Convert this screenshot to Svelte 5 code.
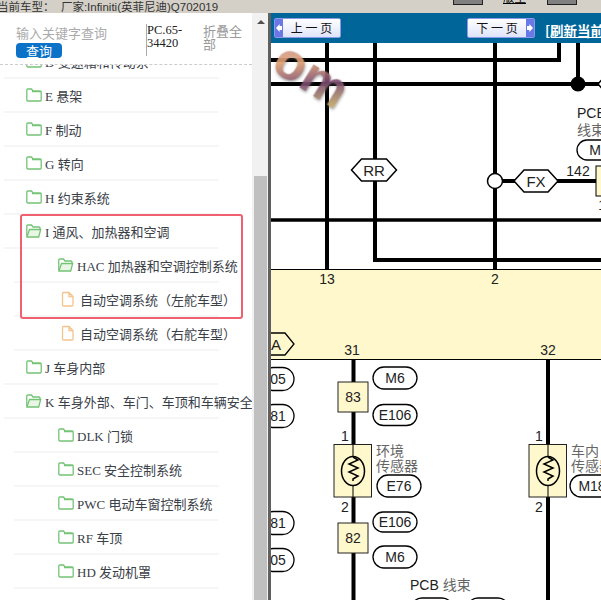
<script>
	// Wiring manual viewer: chapter tree on the left, diagram page on the right.
	const tree = [
		{ label: 'D 变速箱和传动系', kind: 'closed', level: 1 },
		{ label: 'E 悬架', kind: 'closed', level: 1 },
		{ label: 'F 制动', kind: 'closed', level: 1 },
		{ label: 'G 转向', kind: 'closed', level: 1 },
		{ label: 'H 约束系统', kind: 'closed', level: 1 },
		{ label: 'I 通风、加热器和空调', kind: 'open', level: 1 },
		{ label: 'HAC 加热器和空调控制系统', kind: 'open', level: 2 },
		{ label: '自动空调系统（左舵车型）', kind: 'leaf', level: 2 },
		{ label: '自动空调系统（右舵车型）', kind: 'leaf', level: 2 },
		{ label: 'J 车身内部', kind: 'closed', level: 1 },
		{ label: 'K 车身外部、车门、车顶和车辆安全', kind: 'open', level: 1 },
		{ label: 'DLK 门锁', kind: 'closed', level: 2 },
		{ label: 'SEC 安全控制系统', kind: 'closed', level: 2 },
		{ label: 'PWC 电动车窗控制系统', kind: 'closed', level: 2 },
		{ label: 'RF 车顶', kind: 'closed', level: 2 },
		{ label: 'HD 发动机罩', kind: 'closed', level: 2 }
	];

	// connector pills: centre x/y, width, height
	const pills = [
		{ t: '05', x: 278, y: 379, w: 32, h: 23 },
		{ t: '81', x: 278, y: 416, w: 32, h: 23 },
		{ t: '81', x: 278, y: 523, w: 32, h: 23 },
		{ t: '05', x: 278, y: 560, w: 32, h: 23 },
		{ t: 'M6', x: 395, y: 378, w: 44, h: 22 },
		{ t: 'E106', x: 395, y: 415, w: 44, h: 21 },
		{ t: 'E76', x: 399, y: 486, w: 44, h: 22 },
		{ t: 'E106', x: 395, y: 522, w: 44, h: 20 },
		{ t: 'M6', x: 395, y: 557, w: 44, h: 22 },
		{ t: 'M18', x: 592, y: 486, w: 44, h: 22 },
		{ t: 'M2', x: 599, y: 150, w: 44, h: 20 },
		{ t: '', x: 432, y: 609, w: 42, h: 22 },
		{ t: '', x: 488, y: 609, w: 42, h: 22 }
	];

	const boxes = [
		{ t: '83', x: 338, y: 382 },
		{ t: '82', x: 338, y: 523 }
	];

	const labels = [
		{ t: '13', x: 327, y: 284 },
		{ t: '2', x: 495, y: 284 },
		{ t: '31', x: 352, y: 355 },
		{ t: '32', x: 548, y: 355 },
		{ t: '142', x: 578, y: 176 },
		{ t: '14', x: 606, y: 210 },
		{ t: '1', x: 345, y: 441 },
		{ t: '2', x: 345, y: 512 },
		{ t: '1', x: 539, y: 441 },
		{ t: '2', x: 539, y: 512 }
	];

	const sensors = [353, 548];

	function hexPoints(cx, cy, w, h, inset = 10) {
		const l = cx - w / 2;
		const r = cx + w / 2;
		return `${l},${cy} ${l + inset},${cy - h / 2} ${r - inset},${cy - h / 2} ${r},${cy} ${r - inset},${cy + h / 2} ${l + inset},${cy + h / 2}`;
	}
</script>

<div class="page">
	<header class="topbar">
		<span class="car">当前车型：&nbsp; 厂家:Infiniti(英菲尼迪)Q702019</span>
		<span class="tool-btn first"></span>
		<span class="tool-link">版型</span>
		<span class="tool-btn"></span>
	</header>

	<main class="main">
		<aside class="sidebar">
			<div class="search">
				<div class="search-left">
					<div class="placeholder">输入关键字查询</div>
					<button class="query">查询</button>
				</div>
				<div class="code">PC.65-34420</div>
				<div class="collapse">折叠全部</div>
			</div>
			<div class="tree-clip">
				<ul class="tree">
					{#each tree as node}
						<li class="node level{node.level}" class:leaf={node.kind === 'leaf'}>
							{#if node.kind === 'leaf'}
								<svg class="icon" width="13" height="16" viewBox="0 0 13 16">
									<path d="M1.5 2.5a1 1 0 0 1 1-1h5.5l4 4v8.5a1 1 0 0 1-1 1h-8.500a1 1 0 0 1-1-1zM8 1.500v4h4" fill="none" stroke="#f5c48c" stroke-width="1.300" />
								</svg>
							{:else if node.kind === 'open'}
								<svg class="icon" width="16" height="14" viewBox="0 0 16 14">
									<path d="M.8 12V2a1 1 0 0 1 1-1h3.700l1.500 2h6a1 1 0 0 1 1 1v1.500" fill="none" stroke="#74c476" stroke-width="1.300" />
									<path d="M3.500 5.500h11.200l-2 7.500H.9z" fill="#e9f6e6" stroke="#74c476" stroke-width="1.300" />
								</svg>
							{:else}
								<svg class="icon" width="16" height="14" viewBox="0 0 16 14">
									<path d="M.8 12V2a1 1 0 0 1 1-1h3.700l1.500 2h7.200a1 1 0 0 1 1 1v8a1 1 0 0 1-1 1H1.800a1 1 0 0 1-1-1zM6 3.700h9" fill="none" stroke="#74c476" stroke-width="1.300" />
								</svg>
							{/if}
							<span class="label">{node.label}</span>
						</li>
					{/each}
				</ul>
				<div class="highlight"></div>
			</div>
		</aside>

		<div class="scrollbar">
			<span class="arrow"></span>
			<span class="thumb"></span>
		</div>

		<section class="viewer">
			<nav class="pager">
				<button class="page-btn prev"><i class="cap"></i><span>上 一 页</span></button>
				<button class="page-btn next"><span>下 一 页</span><i class="cap"></i></button>
				<a class="refresh" href="#top">[刷新当前页面]</a>
			</nav>

			<svg class="diagram" width="330" height="557" viewBox="271 43 330 557">
				<defs>
					<linearGradient id="wm" x1="0" y1="0" x2="1" y2="1">
						<stop offset="0" stop-color="#b58ab5" />
						<stop offset=".35" stop-color="#e0a070" />
						<stop offset=".6" stop-color="#7a4a70" />
						<stop offset="1" stop-color="#e4d860" />
					</linearGradient>
					<filter id="wm-shadow" x="-20%" y="-20%" width="150%" height="150%">
						<feDropShadow dx="1" dy="1" stdDeviation="1.500" flood-color="#555" flood-opacity=".7" />
					</filter>
				</defs>

				<rect x="271" y="269" width="330" height="90" fill="#fff8cc" />
				<path d="M271 269.500H601M271 359.500H601" stroke="#000" stroke-width="1" />

				<g fill="none" stroke="#000" stroke-width="4">
					<path d="M327 43V269M375 43V260H601M495 43V269M559 43V60H271M578 43V84M271 84H601" />
					<path d="M271 220H601" stroke-width="3.500" />
					<path d="M353.500 359V600M548 359V600" />
					<path d="M495 181H601" />
				</g>

				<circle cx="578" cy="84" r="7.500" fill="#000" />
				<polygon points={hexPoints(610, 84, 24, 22, 10)} fill="#fff" stroke="#000" stroke-width="1.500" />

				<polygon points={hexPoints(374, 170, 45, 22)} fill="#fff" stroke="#000" stroke-width="1.500" />
				<polygon points={hexPoints(536, 181, 44, 22)} fill="#fff" stroke="#000" stroke-width="1.500" />
				<circle cx="495" cy="181" r="7.500" fill="#fff" stroke="#000" stroke-width="1.500" />
				<rect x="596" y="166" width="30" height="30" fill="#fff8cc" stroke="#000" />
				<polygon points="260,333 306,333 294,344 283,355 260,355" fill="none" />
				<polygon points="260,333 285,333 294,344 285,355 260,355" fill="#fff8cc" stroke="#000" stroke-width="1.300" />

				<text class="t big" x="374" y="175.500">RR</text>
				<text class="t big" x="536" y="186.500">FX</text>
				<text class="t big" x="276" y="349.500">A</text>

				{#each labels as l}
					<text class="t" x={l.x} y={l.y}>{l.t}</text>
				{/each}

				{#each pills as p}
					<rect x={p.x - p.w / 2} y={p.y - p.h / 2} width={p.w} height={p.h} rx={p.h / 2} fill="#fff" stroke="#000" stroke-width="1.300" />
					<text class="t" x={p.x} y={p.y + 5}>{p.t}</text>
				{/each}

				{#each boxes as b}
					<rect x={b.x} y={b.y} width="30" height="30" fill="#fff8cc" stroke="#222" />
					<text class="t" x={b.x + 15} y={b.y + 20}>{b.t}</text>
				{/each}

				{#each sensors as x}
					<rect x={x - 19} y="444.500" width="37.500" height="52.500" fill="#fff8cc" stroke="#222" />
					<path d={`M${x} 444V497`} stroke="#000" stroke-width="1" />
					<ellipse cx={x} cy="471" rx="11.500" ry="14.500" fill="#fff8cc" stroke="#000" stroke-width="1.500" />
					<path d={`M${x} 457l5 3-9 4 9 4-9 4 9 4-5 3v2`} fill="none" stroke="#000" stroke-width="1.500" />
				{/each}

				<text class="cn" x="577" y="118">PCB</text>
				<text class="cn grey" x="577" y="135">线束</text>
				<text class="cn grey" x="376" y="456">环境</text>
				<text class="cn grey" x="376" y="471">传感器</text>
				<text class="cn grey" x="571" y="456">车内</text>
				<text class="cn grey" x="571" y="471">传感器</text>
				<text class="cn" x="410" y="590">PCB <tspan class="grey">线束</tspan></text>

				<text class="wm" x="276" y="82" transform="rotate(32 296 64)" filter="url(#wm-shadow)">om</text>
			</svg>
		</section>
	</main>
</div>

<style>
	:global(body) {
		margin: 0;
		background: #fff;
		overflow: hidden;
	}

	.page {
		width: 601px;
		height: 600px;
		display: flex;
		flex-direction: column;
		overflow: hidden;
		font-family: "Liberation Serif", "Noto Sans CJK SC", serif;
	}

	.topbar {
		flex: none;
		height: 13px;
		background: #d4d0c8;
		display: flex;
		align-items: flex-start;
		overflow: hidden;
		font-family: "Liberation Sans", "Noto Sans CJK SC", sans-serif;
		font-size: 11.500px;
		line-height: 16px;
		color: #333;
	}

	.car {
		width: 453px;
		margin-left: -3px;
		margin-top: -1px;
		flex: none;
		white-space: nowrap;
	}

	.tool-btn {
		width: 30px;
		height: 5px;
		flex: none;
		background: #808080;
		border: 1px solid #222;
		border-top: none;
		box-sizing: border-box;
	}

	.tool-btn.first {
		margin-left: 3px;
	}

	.tool-link {
		width: 24px;
		margin: -10px 20px 0;
		flex: none;
		color: #000;
		text-decoration: underline;
		white-space: nowrap;
	}

	.main {
		flex: 1;
		min-height: 0;
		display: flex;
	}

	.sidebar {
		flex: none;
		width: 252px;
		display: flex;
		flex-direction: column;
		background: #fff;
	}

	.search {
		flex: none;
		height: 52px;
		box-sizing: border-box;
		padding: 10px 0 0 16px;
		display: flex;
		align-items: flex-start;
		border-bottom: 1px dashed #ccc;
		margin-left: 4px;
		margin-left: 0;
	}

	.search-left {
		width: 130px;
		flex: none;
	}

	.placeholder {
		font-family: "Noto Sans CJK SC", sans-serif;
		font-size: 13px;
		line-height: 20px;
		color: #aaa;
	}

	.query {
		display: block;
		width: 46px;
		height: 15px;
		padding: 0;
		border: none;
		border-radius: 4px;
		background: #0b72c8;
		color: #fff;
		font: 13px/15px "Noto Sans CJK SC", sans-serif;
	}

	.code {
		flex: none;
		width: 56px;
		height: 32px;
		border-left: 1px solid #aaa;
		margin-top: 1px;
		font-size: 12.500px;
		line-height: 13px;
		color: #222;
	}

	.collapse {
		flex: none;
		width: 42px;
		font: 13px/13px "Noto Sans CJK SC", sans-serif;
		color: #999;
		margin-top: 1px;
	}

	.tree-clip {
		flex: 1;
		min-height: 0;
		overflow: hidden;
		position: relative;
	}

	.tree {
		list-style: none;
		margin: -20px 0 0;
		padding: 0;
	}

	.node {
		height: 34px;
		box-sizing: border-box;
		display: flex;
		align-items: center;
		position: relative;
		white-space: nowrap;
		font-size: 13px;
		color: #3a4048;
		border-bottom: 2px solid #f6f6f6;
		margin-right: 33px;
	}

	.level1 {
		margin-left: 4px;
		padding-left: 22px;
	}

	.level2 {
		margin-left: 14px;
		padding-left: 44px;
	}

	.level2.leaf {
		padding-left: 47px;
	}

	.icon {
		flex: none;
		margin-right: 3px;
	}

	.leaf .icon {
		margin-right: 6px;
	}

	.highlight {
		position: absolute;
		left: 20px;
		top: 149px;
		width: 223px;
		height: 105px;
		box-sizing: border-box;
		border: 2px solid #f0606f;
		border-radius: 3px;
	}

	.scrollbar {
		flex: none;
		width: 16px;
		background: #f1f1f1;
		display: flex;
		flex-direction: column;
		align-items: center;
		box-sizing: border-box;
		padding-left: 1px;
	}

	.arrow {
		margin-top: 7px;
		border-left: 4px solid transparent;
		border-right: 4px solid transparent;
		border-bottom: 4px solid #505050;
	}

	.thumb {
		margin-top: 152px;
		width: 13px;
		flex: 1;
		background: #c0c0c0;
	}

	.viewer {
		flex: none;
		width: 333px;
		min-width: 0;
		display: flex;
		flex-direction: column;
		border-left: 3px solid #606060;
		box-sizing: border-box;
	}

	.pager {
		flex: none;
		height: 30px;
		background: #006699;
		display: flex;
		align-items: center;
		overflow: hidden;
		white-space: nowrap;
	}

	.page-btn {
		height: 20px;
		padding: 0;
		flex: none;
		display: flex;
		align-items: center;
		border: 1px solid #8a9ae8;
		border-radius: 2px;
		background: linear-gradient(#ffffff, #dfe4fa);
		font: 12px/18px "Noto Sans CJK SC", sans-serif;
		color: #111;
	}

	.page-btn span {
		flex: 1;
		text-align: center;
	}

	.prev {
		width: 67px;
		margin-left: 3px;
	}

	.next {
		width: 68px;
		margin-left: 126px;
	}

	.cap {
		width: 8px;
		height: 18px;
		background: #6a78e6;
		position: relative;
	}

	.cap::after {
		content: "";
		position: absolute;
		top: 5px;
		left: 1px;
		width: 6px;
		height: 8px;
		background: #fff;
	}

	.prev .cap::after {
		clip-path: polygon(0 50%, 60% 0, 60% 25%, 100% 25%, 100% 75%, 60% 75%, 60% 100%);
	}

	.next .cap::after {
		clip-path: polygon(100% 50%, 40% 0, 40% 25%, 0 25%, 0 75%, 40% 75%, 40% 100%);
	}

	.refresh {
		margin-left: 10px;
		margin-top: 4px;
		font: bold 13.500px "Noto Sans CJK SC", sans-serif;
		color: #fff;
		text-decoration: underline;
	}

	.diagram {
		display: block;
		flex: none;
		background: #fff;
	}

	.t {
		font: 14px "Liberation Sans", sans-serif;
		text-anchor: middle;
		fill: #222;
	}

	.t.big {
		font-size: 15px;
	}

	.cn {
		font: 14px "Liberation Sans", "Noto Sans CJK SC", sans-serif;
		fill: #222;
	}

	.grey {
		fill: #666;
	}

	.wm {
		font: bold 52px "Liberation Sans", sans-serif;
		fill: url(#wm);
		opacity: .9;
	}
</style>
